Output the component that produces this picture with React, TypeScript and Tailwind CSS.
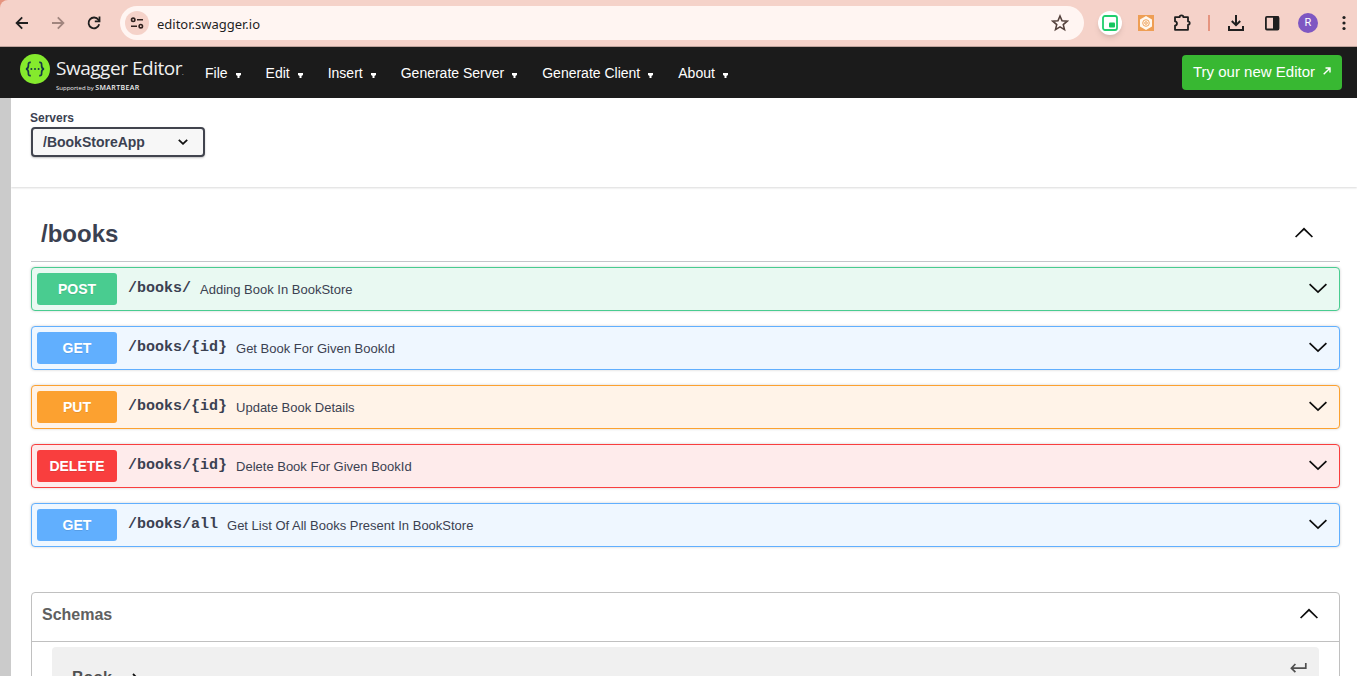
import type { ReactNode } from "react";

type Method = "POST" | "GET" | "PUT" | "DELETE";

interface Operation {
  method: Method;
  path: string;
  summary: string;
}

const operations: Operation[] = [
  { method: "POST", path: "/books/", summary: "Adding Book In BookStore" },
  { method: "GET", path: "/books/{id}", summary: "Get Book For Given BookId" },
  { method: "PUT", path: "/books/{id}", summary: "Update Book Details" },
  { method: "DELETE", path: "/books/{id}", summary: "Delete Book For Given BookId" },
  { method: "GET", path: "/books/all", summary: "Get List Of All Books Present In BookStore" },
];

const rowStyles: Record<Method, string> = {
  POST: "border-[#49cc90] bg-[#e9f9f2]",
  GET: "border-[#61affe] bg-[#eff7ff]",
  PUT: "border-[#fca130] bg-[#fff3e8]",
  DELETE: "border-[#f93e3e] bg-[#feebeb]",
};

const badgeStyles: Record<Method, string> = {
  POST: "bg-[#49cc90]",
  GET: "bg-[#61affe]",
  PUT: "bg-[#fca130]",
  DELETE: "bg-[#f93e3e]",
};

const menus = ["File", "Edit", "Insert", "Generate Server", "Generate Client", "About"];

function Chevron({ up = false }: { up?: boolean }) {
  return (
    <svg width="20" height="20" viewBox="0 0 20 20" fill="none" stroke="#0c0c0c" strokeWidth="1.7" className="shrink-0">
      <path d={up ? "M1.6 13 L10 4.8 L18.4 13" : "M1.6 5.2 L10 13.2 L18.4 5.2"} />
    </svg>
  );
}

function IconButton({ label, children }: { label: string; children: ReactNode }) {
  return (
    <button type="button" aria-label={label} className="flex h-6 w-6 shrink-0 items-center justify-center">
      {children}
    </button>
  );
}

function BrowserBar() {
  return (
    <div className="bg-[#e5947f]">
      <div className="flex h-[47px] items-center rounded-tl-lg border-b border-[#bfa39c] bg-[#f5d2c9] pr-px pl-[10px] text-[#1f1f1f]">
        <div className="flex gap-3">
          <IconButton label="Back">
            <svg width="14" height="14" viewBox="0 0 14 14" fill="none" stroke="currentColor" strokeWidth="1.8">
              <path d="M13 7H2M7.2 1.4 1.6 7l5.6 5.6" />
            </svg>
          </IconButton>
          <IconButton label="Forward">
            <svg width="14" height="14" viewBox="0 0 14 14" fill="none" stroke="#a1857e" strokeWidth="1.8">
              <path d="M1 7h11M6.8 1.4 12.4 7l-5.6 5.6" />
            </svg>
          </IconButton>
          <IconButton label="Reload">
            <svg width="14" height="14" viewBox="0 0 14 14" fill="none" stroke="currentColor" strokeWidth="1.8">
              <path d="M12.2 8.3A5.4 5.4 0 1 1 11.4 3.8L12.4 5" />
              <path d="M12.5 .5V5.3H7.8" />
            </svg>
          </IconButton>
        </div>
        <div className="ml-[14px] flex h-[34px] flex-1 items-center rounded-full bg-[#fff5f2] pr-3 pl-[5px]">
          <button type="button" aria-label="Site information" className="flex h-6 w-6 items-center justify-center rounded-full bg-[#f5d2c9]">
            <svg width="14" height="12" viewBox="0 0 14 12" fill="none" stroke="#30221f" strokeWidth="1.6">
              <circle cx="3.2" cy="2.8" r="1.7" />
              <path d="M7 2.8h6M1 9.2h6" />
              <circle cx="10.8" cy="9.2" r="1.7" />
            </svg>
          </button>
          <input
            aria-label="Address"
            defaultValue="editor.swagger.io"
            className="ml-2 h-6 min-w-0 flex-1 bg-transparent pt-px font-['Noto_Sans',sans-serif] text-[13px] outline-none"
          />
          <IconButton label="Bookmark">
            <svg width="18" height="18" viewBox="0 0 16 16" fill="none" stroke="#54413c" strokeWidth="1.4">
              <path d="M8 1.8 9.8 6l4.6.4-3.5 3 1.1 4.5L8 11.5l-4 2.4 1.1-4.5-3.5-3L6.2 6z" />
            </svg>
          </IconButton>
        </div>
        <div className="ml-[14px] flex items-center gap-3">
          <IconButton label="Picture in picture">
            <span className="flex h-6 w-6 shrink-0 items-center justify-center rounded-full bg-white shadow-md">
              <svg width="16" height="16" viewBox="0 0 16 16" fill="none">
                <rect x="1" y="1" width="14" height="14" rx="2" stroke="#1fce6d" strokeWidth="1.8" />
                <rect x="7" y="7.5" width="6" height="5" rx="1" fill="#16c65f" />
              </svg>
            </span>
          </IconButton>
          <IconButton label="Extension">
            <svg width="16" height="16" viewBox="0 0 16 16">
              <rect width="16" height="16" fill="#ee9e54" />
              <path d="M8 1 14 4.4v7.2L8 15l-6-3.4V4.4z" fill="#fff8ef" />
              <circle cx="8" cy="8" r="3.3" fill="none" stroke="#f0a560" strokeWidth="1" />
              <circle cx="8" cy="8" r="1.3" fill="none" stroke="#f0a560" strokeWidth="1" />
            </svg>
          </IconButton>
          <IconButton label="Extensions">
            <svg width="18" height="18" viewBox="0 0 18 18" fill="none" stroke="currentColor" strokeWidth="1.8" strokeLinejoin="round">
              <path d="M2 3.2h4.6a1.9 1.9 0 0 1 3.8 0H15v4.2a1.7 1.7 0 0 1 0 3.4v5H2v-4.2c2.6-.3 2.6-3.9 0-4.2z" />
            </svg>
          </IconButton>
        </div>
        <div className="ml-[14px] h-4 w-[2px] bg-[#e5947f]" />
        <div className="ml-[14px] flex items-center gap-3">
          <IconButton label="Downloads">
            <svg width="16" height="16" viewBox="0 0 16 16" fill="none" stroke="currentColor" strokeWidth="2">
              <path d="M8 0v10M3.8 6 8 10.2 12.2 6M1 11v4h14v-4" />
            </svg>
          </IconButton>
          <IconButton label="Side panel">
            <svg width="16" height="16" viewBox="0 0 16 16">
              <rect x="1.9" y="1.9" width="12.6" height="12.6" rx="1" fill="none" stroke="currentColor" strokeWidth="1.8" />
              <path d="M9 1.5h6v13.4H9z" fill="currentColor" />
            </svg>
          </IconButton>
          <IconButton label="Profile">
            <span className="flex h-5 w-5 items-center justify-center rounded-full bg-[#7e57c2] font-[Roboto,sans-serif] text-[11px] text-white">
              R
            </span>
          </IconButton>
          <IconButton label="Browser menu">
            <svg width="4" height="16" viewBox="0 0 4 16" fill="currentColor">
              <circle cx="2" cy="2.5" r="1.6" />
              <circle cx="2" cy="8" r="1.6" />
              <circle cx="2" cy="13.5" r="1.6" />
            </svg>
          </IconButton>
        </div>
      </div>
    </div>
  );
}

function Logo() {
  return (
    <a href="#" className="flex w-[163px] shrink-0 text-[#f0f0f0]">
      <svg width="30" height="30" viewBox="0 0 30 30" className="shrink-0">
        <circle cx="15" cy="15" r="15" fill="#85ea2d" />
        <g fill="none" stroke="#173647" strokeWidth="1.7">
          <path d="M10.8 8.4C8.6 8.2 8.3 9 8.4 11.2 8.5 13.6 8 14.6 6 15c2 .4 2.5 1.4 2.4 3.8C8.3 21 8.6 21.8 10.8 21.6" />
          <path d="M19.2 8.4c2.2-.2 2.5.6 2.4 2.8-.1 2.4.4 3.4 2.4 3.8-2 .4-2.5 1.4-2.4 3.8.1 2.2-.2 3-2.4 2.8" />
        </g>
        <g fill="#173647">
          <circle cx="11.4" cy="15" r="1" />
          <circle cx="15" cy="15" r="1" />
          <circle cx="18.6" cy="15" r="1" />
        </g>
      </svg>
      <span className="ml-[6px] flex flex-col pt-[3px] font-['Open_Sans',sans-serif] whitespace-nowrap">
        <span className="text-[19px] leading-[22px] tracking-tight">
          Swagger Editor<span className="text-[6px]">.</span>
        </span>
        <span className="text-[6px] leading-2">
          Supported by <b className="text-[7px] font-semibold tracking-wider">SMARTBEAR</b>
        </span>
      </span>
    </a>
  );
}

function EditorHeader() {
  return (
    <header className="flex h-[51px] items-center bg-[#1b1b1b] pr-[15px] pl-5 text-white">
      <Logo />
      <nav className="flex flex-1 gap-[25px] pt-px pl-[22px] text-[14px]">
        {menus.map((name) => (
          <button key={name} type="button" className="flex items-center gap-2 whitespace-nowrap">
            {name}
            <svg width="5" height="5" viewBox="0 0 5 5" fill="currentColor" className="mt-1">
              <path d="M0 0h5v2L3.5 3v2h-2V3L0 2z" />
            </svg>
          </button>
        ))}
      </nav>
      <button type="button" className="flex h-[35px] items-center gap-2 rounded bg-[#38b832] px-[11px] text-[15px] whitespace-nowrap">
        Try our new Editor
        <svg width="8" height="8" viewBox="0 0 8 8" fill="none" stroke="currentColor" strokeWidth="1.4" className="mb-1">
          <path d="M.7 7.3 6.6 1.4M2.5 1H7v4.5" />
        </svg>
      </button>
    </header>
  );
}

function OperationRow({ method, path, summary }: Operation) {
  return (
    <button
      type="button"
      className={`flex h-11 w-full items-center rounded border pr-[11px] pl-[5px] text-left shadow-[0_0_3px_rgba(0,0,0,0.19)] ${rowStyles[method]}`}
    >
      <span
        className={`flex h-8 w-20 items-center justify-center rounded-[3px] text-[14px] font-bold text-white [text-shadow:0_1px_0_rgba(0,0,0,0.1)] ${badgeStyles[method]}`}
      >
        {method}
      </span>
      <span className="ml-[11px] font-['Liberation_Mono',monospace] text-[15px] leading-5 font-bold">{path}</span>
      <span className="ml-[9px] flex-1 pt-px text-[13px]">{summary}</span>
      <Chevron />
    </button>
  );
}

export default function App() {
  return (
    <div className="flex h-screen flex-col overflow-hidden bg-white font-['Liberation_Sans',Arial,sans-serif] text-[#3b4151]">
      <BrowserBar />
      <EditorHeader />
      <main className="min-h-0 flex-1 overflow-hidden border-l-[11px] border-[#cbcbcb]">
        <section className="h-[89px] pt-3 pl-[19px] shadow-[0_1px_2px_rgba(0,0,0,0.15)]">
          <label htmlFor="servers" className="block text-[12px] leading-4 font-bold">
            Servers
          </label>
          <div className="relative mt-px ml-px w-[174px]">
            <select
              id="servers"
              className="block h-[30px] w-full appearance-none rounded border-2 border-[#41444e] bg-[#f7f7f7] pl-[10px] text-[14px] font-bold shadow-[0_1px_2px_rgba(0,0,0,0.25)]"
            >
              <option>/BookStoreApp</option>
            </select>
            <svg
              width="10"
              height="6"
              viewBox="0 0 10 6"
              fill="none"
              stroke="#111"
              strokeWidth="1.8"
              className="pointer-events-none absolute top-3 right-[17px]"
            >
              <path d="M.8 .8 5 4.8 9.2 .8" />
            </svg>
          </div>
        </section>

        <section className="pt-[19px] pr-[17px] pl-5">
          <h2 className="mb-[5px] border-b border-[#c4c6ca]">
            <button type="button" className="flex h-[55px] w-full items-center justify-between pr-[26px] pl-[10px] text-[24px] font-bold">
              /books
              <Chevron up />
            </button>
          </h2>
          <div className="flex flex-col gap-[15px]">
            {operations.map((op) => (
              <OperationRow key={op.method + op.path} {...op} />
            ))}
          </div>
        </section>

        <section className="mt-[45px] mr-[17px] ml-5 rounded border border-[#c0c0c0]">
          <h3 className="border-b border-[#c0c0c0]">
            <button type="button" className="flex h-12 w-full items-center justify-between pr-5 pb-1 pl-[10px] text-[16px] font-bold text-[#606060]">
              Schemas
              <Chevron up />
            </button>
          </h3>
          <div className="mx-5 mt-[5px] mb-4 flex h-[61px] items-center justify-between rounded bg-[#f0f0f0] pr-3 pl-5">
            <button type="button" className="flex items-center gap-5 text-[16px] font-bold text-[#505050]">
              Book
              <svg width="6" height="10" viewBox="0 0 6 10" fill="none" stroke="#111" strokeWidth="1.8">
                <path d="M1 1l4 4-4 4" />
              </svg>
            </button>
            <button type="button" aria-label="Expand Book" className="mb-5">
              <svg width="17" height="10" viewBox="0 0 17 10" fill="none" stroke="#505050" strokeWidth="1.7">
                <path d="M15.8 0v5.2H1.8M5.4 1 1.4 5.2l4 4" />
              </svg>
            </button>
          </div>
        </section>
      </main>
    </div>
  );
}
